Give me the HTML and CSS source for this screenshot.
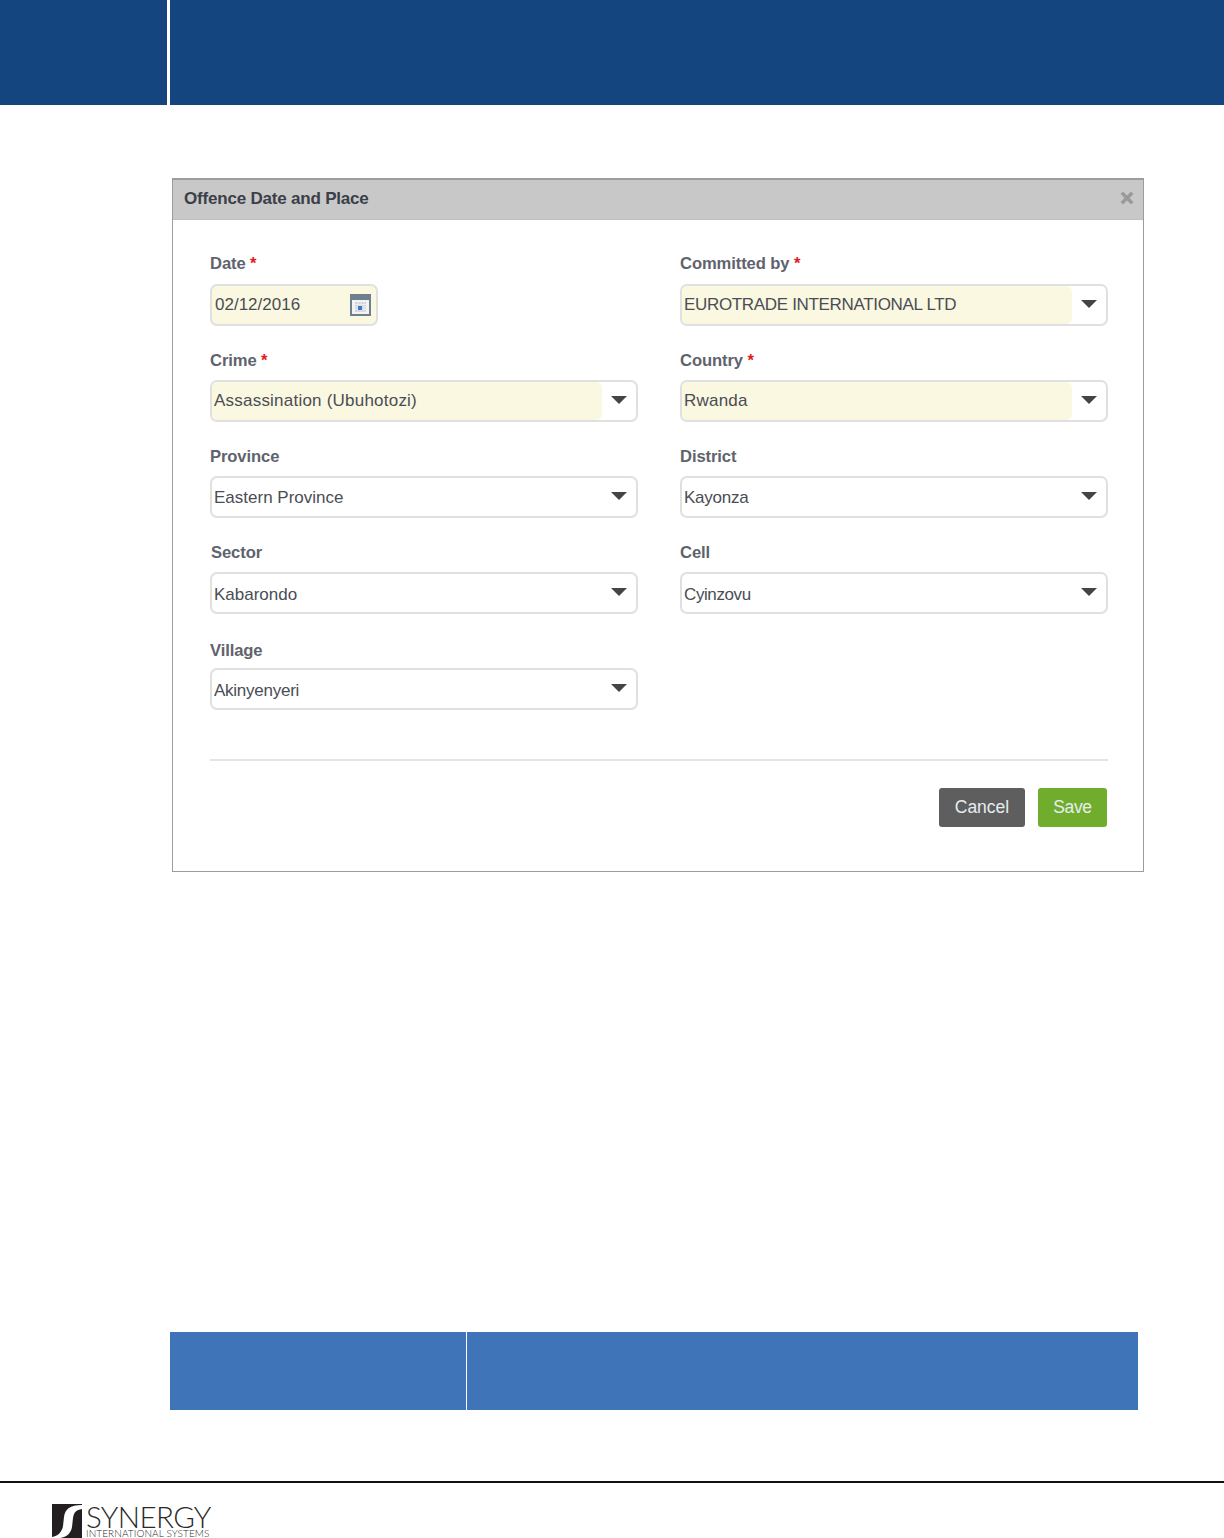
FILE: index.html
```html
<!DOCTYPE html>
<html lang="en">
<head>
<meta charset="utf-8">
<title>Offence Date and Place</title>
<link rel="stylesheet" href="styles.css">
</head>
<body>
<header class="top"><div class="top-a"></div><div class="top-b"></div></header>
<main class="main">
  <section class="modal">
    <div class="modal-head">
      <h2 class="modal-title">Offence Date and Place</h2>
      <svg class="close" viewBox="0 0 14 14" width="14" height="14"><path d="M3 .5 7 4.500l4-4 2.500 2.500-4 4 4 4-2.500 2.500-4-4-4 4L.5 11l4-4-4-4z" fill="#9a9a9a"/></svg>
    </div>
    <form class="modal-body">
      <div class="grid">
        <div class="field">
          <label class="label">Date <span class="req">*</span></label>
          <div class="input date req-bg"><span class="value">02/12/2016</span>
            <svg class="cal" viewBox="0 0 21 22" width="21" height="22"><rect width="21" height="22" fill="#6f7f8c"/><rect x="2" y="6" width="17" height="14" fill="#f1f3f5"/><path d="M5 8h11v10H5z" fill="#cfd5da"/><path d="M8 8v10M11 8v10M14 8v10M5 10.500h11M5 13h11M5 15.500h11" stroke="#f4f5f6" stroke-width=".7"/><rect x="8" y="12" width="4" height="4" fill="#3a7cc0"/></svg>
          </div>
        </div>
        <div class="field">
          <label class="label">Committed by <span class="req">*</span></label>
          <div class="input select"><span class="fill req-bg"><span class="value tight-caps">EUROTRADE INTERNATIONAL LTD</span></span><span class="arrow"></span></div>
        </div>
        <div class="field">
          <label class="label low">Crime <span class="req">*</span></label>
          <div class="input select"><span class="fill req-bg"><span class="value wide">Assassination (Ubuhotozi)</span></span><span class="arrow"></span></div>
        </div>
        <div class="field">
          <label class="label low">Country <span class="req">*</span></label>
          <div class="input select"><span class="fill req-bg"><span class="value wide">Rwanda</span></span><span class="arrow"></span></div>
        </div>
        <div class="field">
          <label class="label low">Province</label>
          <div class="input select"><span class="fill"><span class="value down-1">Eastern Province</span></span><span class="arrow"></span></div>
        </div>
        <div class="field">
          <label class="label low">District</label>
          <div class="input select"><span class="fill"><span class="value down-1 tight">Kayonza</span></span><span class="arrow"></span></div>
        </div>
        <div class="field">
          <label class="label low inset">Sector</label>
          <div class="input select"><span class="fill"><span class="value down-2">Kabarondo</span></span><span class="arrow"></span></div>
        </div>
        <div class="field">
          <label class="label low">Cell</label>
          <div class="input select"><span class="fill"><span class="value down-2 tighter">Cyinzovu</span></span><span class="arrow"></span></div>
        </div>
        <div class="field">
          <label class="label lower">Village</label>
          <div class="input select"><span class="fill"><span class="value down-2 tight">Akinyenyeri</span></span><span class="arrow"></span></div>
        </div>
      </div>
      <div class="actions">
        <button type="button" class="btn cancel">Cancel</button>
        <button type="button" class="btn save">Save</button>
      </div>
    </form>
  </section>
  <div class="band"><div class="band-a"></div><div class="band-b"></div></div>
</main>
<footer class="foot">
  <div class="logo">
    <svg class="mark" viewBox="0 0 30 34" width="30" height="34"><rect width="30" height="34" fill="#231f20"/><path d="M30 1C18 1 13 5 12 13l-1 9c-1 6-5 10-11 11v1h8c7-1 11-5 12-11l1-9c1-6 3-8 9-9z" fill="#fff"/></svg>
    <div class="logo-text"><div class="logo-name">SYNERGY</div><div class="logo-sub">INTERNATIONAL SYSTEMS</div></div>
  </div>
</footer>
</body>
</html>
```
FILE: styles.css
```css
html, body { margin: 0; padding: 0; background: #fff; }
body { width: 1224px; height: 1538px; overflow: hidden; font-family: "Liberation Sans", Arial, sans-serif; }
.top { display: flex; height: 105px; gap: 3px; }
.top-a { width: 167px; background: #14457e; }
.top-b { flex: 1; background: #14457e; }
.main { padding-top: 73px; }
.modal { box-sizing: border-box; width: 972px; height: 694px; margin-left: 172px; border: 1px solid #9c9c9c; border-top-width: 2px; }
.modal-head { box-sizing: border-box; height: 40px; background: #c8c8c8; display: flex; align-items: center; justify-content: space-between; padding: 0 9px 2px 11px; border-bottom: 1px solid #c0c0c0; }
.modal-title { margin: 0; font-size: 17px; font-weight: bold; color: #3a3f48; letter-spacing: -.2px; }
.close { display: block; margin-top: -2px; }
.modal-body { display: block; padding: 33px 35px 0 37px; }
.grid { display: grid; grid-template-columns: 428px 428px; column-gap: 42px; row-gap: 12px; height: 506px; align-content: start; }
.field { height: 84px; }
.label { display: block; height: 22px; line-height: 22px; margin-bottom: 9px; font-size: 16.600px; font-weight: bold; color: #5f636d; letter-spacing: -.1px; }
.label.low { line-height: 24px; }
.label.lower { line-height: 27px; }
.label.inset { padding-left: 1px; }
.req { color: #e01b1b; }
.input { box-sizing: border-box; height: 42px; border: 2px solid #e0e0e0; border-radius: 7px; display: flex; align-items: center; background: #fff; overflow: hidden; }
.date { width: 168px; justify-content: space-between; padding: 0 5px 0 3px; }
.req-bg { background: #faf8e0; }
.fill { flex: 1; align-self: stretch; display: flex; align-items: center; padding-left: 2px; border-radius: 0 6px 6px 0; }
.value { font-size: 17px; color: #4a4d55; }
.value.wide { letter-spacing: .22px; }
.value.tight { letter-spacing: -.25px; }
.value.tighter { letter-spacing: -.4px; }
.value.tight-caps { letter-spacing: -.33px; }
.value.down-1 { padding-top: 1px; }
.value.down-2 { padding-top: 3px; }
.arrow { width: 34px; flex: none; display: flex; justify-content: center; }
.arrow::after { content: ""; display: block; margin: -3px 0 0 0; border-left: 8px solid transparent; border-right: 8px solid transparent; border-top: 8px solid #444; }
.cal { display: block; }
.actions { display: flex; justify-content: flex-end; gap: 13px; width: 898px; box-sizing: border-box; border-top: 2px solid #e4e4e4; padding-top: 27px; }
.btn { border: 0; border-radius: 3px; height: 39px; font: 17.500px "Liberation Sans", Arial, sans-serif; color: #e6edf0; padding: 0; }
.cancel { width: 86px; background: #5e5e5e; }
.save { width: 69px; background: #70ad2c; margin-right: 1px; letter-spacing: -.4px; }
.band { display: flex; width: 968px; height: 78px; margin: 460px 0 0 170px; gap: 1px; }
.band-a { width: 296px; background: #3f75b8; }
.band-b { flex: 1; background: #3f75b8; }
.foot { margin-top: 71px; border-top: 2px solid #111; padding: 21px 0 0 52px; }
.logo { display: flex; gap: 4px; }
.mark { display: block; flex: none; }
.logo-text { color: #2a2a2a; }
.logo-name { font: 300 29.500px/25px "Lato", sans-serif; letter-spacing: -.6px; }
.logo-sub { font: 300 10px/9px "Lato", sans-serif; letter-spacing: .09px; }
```
